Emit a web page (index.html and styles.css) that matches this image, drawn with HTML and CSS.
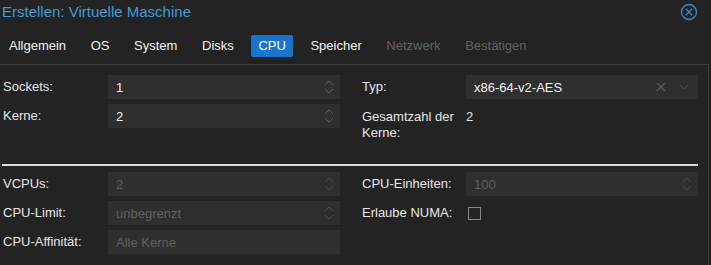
FILE: index.html
```html
<!DOCTYPE html>
<html lang="de">
<head>
  <meta charset="UTF-8">
  <title>Erstellen: Virtuelle Maschine</title>
  <link rel="stylesheet" href="styles.css">
</head>
<body>
  <div class="window">
    <header class="title-bar">
      <span class="title">Erstellen: Virtuelle Maschine</span>
      <svg class="close" width="18" height="18" viewBox="0 0 18 18">
        <circle cx="9" cy="9" r="7.5" fill="none" stroke="#3a8fbf" stroke-width="1.3"/>
        <path d="M5.8 5.8 L12.2 12.2 M12.2 5.8 L5.8 12.2" stroke="#3a8fbf" stroke-width="1.3"/>
      </svg>
    </header>

    <nav class="tabs">
      <span class="tab">Allgemein</span>
      <span class="tab">OS</span>
      <span class="tab">System</span>
      <span class="tab">Disks</span>
      <span class="tab active">CPU</span>
      <span class="tab">Speicher</span>
      <span class="tab disabled">Netzwerk</span>
      <span class="tab disabled">Bestätigen</span>
    </nav>

    <div class="panel">
      <div class="form top">
        <div class="column">
          <div class="row">
            <label>Sockets:</label>
            <div class="field">
              <span class="value">1</span>
              <svg class="spin" width="10" height="18" viewBox="0 0 10 18"><path d="M1 7 L5 3 L9 7 M1 11 L5 15 L9 11" fill="none" stroke="#5a5a5a" stroke-width="1"/></svg>
            </div>
          </div>
          <div class="row">
            <label>Kerne:</label>
            <div class="field">
              <span class="value">2</span>
              <svg class="spin" width="10" height="18" viewBox="0 0 10 18"><path d="M1 7 L5 3 L9 7 M1 11 L5 15 L9 11" fill="none" stroke="#5a5a5a" stroke-width="1"/></svg>
            </div>
          </div>
        </div>
        <div class="column">
          <div class="row">
            <label>Typ:</label>
            <div class="field">
              <span class="value">x86-64-v2-AES</span>
              <svg class="combo-icons" width="38" height="12" viewBox="0 0 38 12"><path d="M2 2 L10 10 M10 2 L2 10" stroke="#5c5c5c" stroke-width="1.1"/><path d="M25 4 L29 8 L33 4" fill="none" stroke="#4a4a4a" stroke-width="1.1"/></svg>
            </div>
          </div>
          <div class="row text-row">
            <label>Gesamtzahl der Kerne:</label>
            <span class="display">2</span>
          </div>
        </div>
      </div>

      <hr class="sep">

      <div class="form">
        <div class="column">
          <div class="row">
            <label>VCPUs:</label>
            <div class="field disabled">
              <span class="value">2</span>
              <svg class="spin" width="10" height="18" viewBox="0 0 10 18"><path d="M1 7 L5 3 L9 7 M1 11 L5 15 L9 11" fill="none" stroke="#4c4c4c" stroke-width="1"/></svg>
            </div>
          </div>
          <div class="row">
            <label>CPU-Limit:</label>
            <div class="field disabled">
              <span class="value">unbegrenzt</span>
              <svg class="spin" width="10" height="18" viewBox="0 0 10 18"><path d="M1 7 L5 3 L9 7 M1 11 L5 15 L9 11" fill="none" stroke="#4c4c4c" stroke-width="1"/></svg>
            </div>
          </div>
          <div class="row">
            <label>CPU-Affinität:</label>
            <div class="field">
              <span class="value placeholder">Alle Kerne</span>
            </div>
          </div>
        </div>
        <div class="column">
          <div class="row">
            <label>CPU-Einheiten:</label>
            <div class="field disabled">
              <span class="value">100</span>
              <svg class="spin" width="10" height="18" viewBox="0 0 10 18"><path d="M1 7 L5 3 L9 7 M1 11 L5 15 L9 11" fill="none" stroke="#4c4c4c" stroke-width="1"/></svg>
            </div>
          </div>
          <div class="row">
            <label>Erlaube NUMA:</label>
            <div class="check-cell"><span class="checkbox"></span></div>
          </div>
        </div>
      </div>
    </div>
  </div>
</body>
</html>
```

FILE: styles.css
```css
* {
  margin: 0;
  padding: 0;
  box-sizing: border-box;
}

body {
  font-family: "Liberation Sans", Arial, sans-serif;
  font-size: 13px;
  background: #232323;
  color: #e6e6e6;
  width: 711px;
  height: 265px;
  overflow: hidden;
}

.window {
  height: 265px;
}

/* Title */
.title-bar {
  display: flex;
  justify-content: space-between;
  align-items: center;
  height: 22px;
  padding: 0 13px 0 2px;
}

.title {
  font-size: 15px;
  color: #3f9bd9;
}

.close {
  margin-top: 1px;
}

/* Tabs */
.tabs {
  display: flex;
  gap: 10.6px;
  margin-top: 13px;
  padding-left: 2px;
  height: 22px;
}

.tab {
  padding: 0 7px;
  line-height: 22px;
  color: #f2f2f2;
  border-radius: 2px;
}

.tab.active {
  background: #1874cd;
  color: #ffffff;
}

.tab.disabled {
  color: #626262;
}

/* Panel */
.panel {
  margin-top: 7px;
  width: 709px;
  height: 201px;
  border-top: 1px solid #3d3d3d;
  border-right: 1px solid #3d3d3d;
  padding: 10px 0 0 3px;
}

.form {
  display: grid;
  grid-template-columns: 337px 336px;
  column-gap: 22px;
}

.form.top {
  height: 78px;
}

.column {
  display: flex;
  flex-direction: column;
  gap: 5px;
}

.row {
  display: grid;
  grid-template-columns: 105px 1fr;
  min-height: 24px;
}

.column:last-child .row {
  grid-template-columns: 104px 1fr;
}

.row label {
  line-height: 24px;
  color: #e6e6e6;
}

.text-row label,
.text-row .display {
  line-height: 16px;
  padding-top: 5px;
  padding-right: 8px;
}

.text-row .display {
  color: #e6e6e6;
}

.field {
  display: flex;
  align-items: center;
  justify-content: space-between;
  height: 24px;
  background: #2f2f2f;
  padding: 0 6px 0 8px;
}

.value {
  color: #f0f0f0;
}

.field.disabled .value,
.value.placeholder {
  color: #606060;
}

.combo-icons {
  margin-right: -1px;
}

.sep {
  border: none;
  height: 2px;
  background: #dcdcdc;
  width: 696px;
  margin: 11px 0 6px -1px;
}

.check-cell {
  display: flex;
  align-items: center;
  height: 24px;
  padding-left: 2px;
}

.checkbox {
  width: 13px;
  height: 13px;
  border: 1px solid #8a8a8a;
}
```
